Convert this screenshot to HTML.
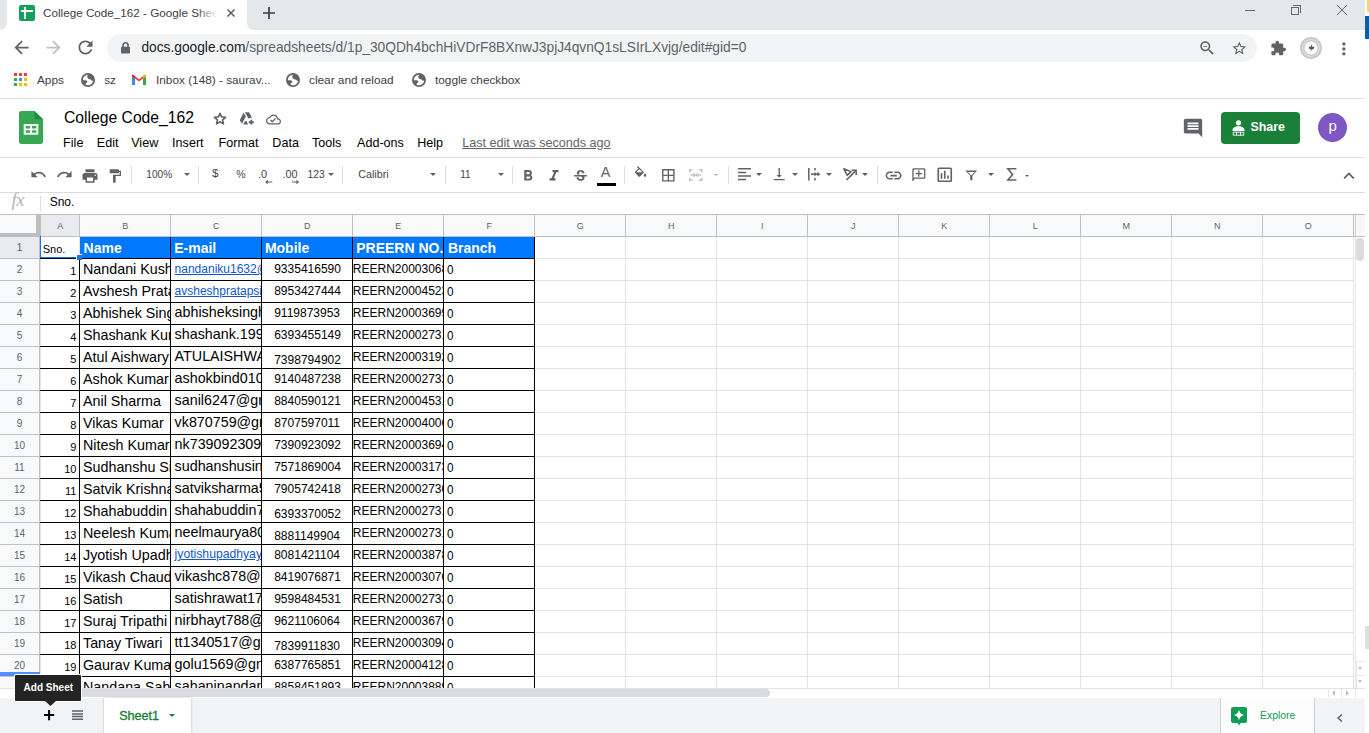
<!DOCTYPE html><html><head><meta charset="utf-8"><style>
*{box-sizing:border-box;margin:0;padding:0}
html,body{width:1369px;height:733px;overflow:hidden;background:#fff;font-family:"Liberation Sans",sans-serif;position:relative}
.abs{position:absolute}
.ic{position:absolute;display:block;overflow:visible}
.t{position:absolute;white-space:nowrap;line-height:1}
.caret{position:absolute;width:0;height:0;border-style:solid;border-color:transparent;border-bottom-width:0}
.clip{position:absolute;overflow:hidden}
</style></head><body>

<div class="abs" style="left:0px;top:0px;width:1365px;height:30px;background:#e5e8eb;"></div>
<div class="abs" style="left:0px;top:0px;width:7px;height:30px;background:#fff;"></div>
<div class="abs" style="left:0px;top:0px;width:7px;height:30px;background:#e5e8eb;border-bottom-right-radius:7px"></div>
<div class="abs" style="left:7px;top:0px;width:240px;height:31px;background:#fff;"></div>
<div class="abs" style="left:247px;top:0px;width:10px;height:30px;background:#fff;"></div>
<div class="abs" style="left:247px;top:0px;width:1118px;height:30px;background:#e5e8eb;border-bottom-left-radius:7px"></div>
<div class="abs" style="left:19px;top:5px;width:16px;height:16px;background:#15a05a;border-radius:2px"></div>
<div class="abs" style="left:24px;top:7px;width:2px;height:12px;background:#fff;"></div>
<div class="abs" style="left:21px;top:10px;width:12px;height:2px;background:#fff;"></div>
<div class="clip" style="left:43px;top:0;width:176px;height:28px"><div class="t" style="left:0px;top:7.30px;font-size:11.7px;color:#3c4043;font-weight:normal;">College Code_162 - Google Sheets</div></div>
<div class="abs" style="left:197px;top:3px;width:23px;height:22px;background:linear-gradient(90deg,rgba(255,255,255,0),#fff 90%);"></div>
<svg class="ic" style="left:227px;top:9px;width:8px;height:8px" viewBox="0 0 8 8"><path d="M0.5 0.5L7.5 7.5M7.5 0.5L0.5 7.5" stroke="#5f6368" stroke-width="1.6"/></svg>
<svg class="ic" style="left:263px;top:7px;width:12px;height:12px" viewBox="0 0 12 12"><path d="M6 0v12M0 6h12" stroke="#3c4043" stroke-width="1.7"/></svg>
<div class="abs" style="left:1245px;top:10px;width:10px;height:1px;background:#6a6a6a;"></div>
<div class="abs" style="left:1291px;top:7px;width:8px;height:8px;background:transparent;border:1px solid #6a6a6a"></div>
<div class="abs" style="left:1293px;top:5px;width:8px;height:8px;background:transparent;border-top:1px solid #6a6a6a;border-right:1px solid #6a6a6a"></div>
<svg class="ic" style="left:1337px;top:5px;width:10px;height:10px" viewBox="0 0 10 10"><path d="M0 0L10 10M10 0L0 10" stroke="#6a6a6a" stroke-width="1"/></svg>
<div class="abs" style="left:1365px;top:0px;width:4px;height:733px;background:#fff;"></div>
<div class="abs" style="left:1367px;top:0px;width:2px;height:12px;background:#f2d675;"></div>
<div class="abs" style="left:1365px;top:16px;width:4px;height:23px;background:#0b5cad;"></div>
<div class="abs" style="left:1365px;top:626px;width:4px;height:23px;background:#e0e0e0;"></div>
<svg class="ic" style="left:10.50px;top:37.00px;width:21.00px;height:21.00px" viewBox="0 0 24 24"><path fill="#5f6368" d="M20 11H7.83l5.59-5.59L12 4l-8 8 8 8 1.41-1.41L7.83 13H20v-2z"/></svg>
<svg class="ic" style="left:42.50px;top:37.00px;width:21.00px;height:21.00px" viewBox="0 0 24 24"><path fill="#bdc1c6" d="M12 4l-1.41 1.41L16.17 11H4v2h12.17l-5.58 5.59L12 20l8-8z"/></svg>
<svg class="ic" style="left:74.50px;top:37.40px;width:21.00px;height:21.00px" viewBox="0 0 24 24"><path fill="#5f6368" d="M17.65 6.35C16.2 4.9 14.21 4 12 4c-4.42 0-7.99 3.58-7.99 8s3.57 8 7.99 8c3.73 0 6.84-2.55 7.73-6h-2.08c-.82 2.33-3.04 4-5.65 4-3.31 0-6-2.690-6-6s2.69-6 6-6c1.66 0 3.14.69 4.22 1.78L13 11h7V4l-2.35 2.35z"/></svg>
<div class="abs" style="left:107px;top:34px;width:1150px;height:28px;background:#f1f3f4;border-radius:14px"></div>
<svg class="ic" style="left:120.5px;top:41.5px;width:9px;height:11.5px" viewBox="0 0 9 11.5"><path d="M2 5V3.3a2.5 2.5 0 0 1 5 0V5" stroke="#5f6368" stroke-width="1.6" fill="none"/><rect x="0" y="4.8" width="9" height="6.7" rx="1" fill="#5f6368"/></svg>
<div class="t" style="left:141.4px;top:40.76px;font-size:13.75px;color:#202124;font-weight:normal;">docs.google.com<span style="color:#5f6368">/spreadsheets/d/1p_30QDh4bchHiVDrF8BXnwJ3pjJ4qvnQ1sLSIrLXvjg/edit#gid=0</span></div>
<svg class="ic" style="left:1197.70px;top:38.70px;width:18.40px;height:18.40px" viewBox="0 0 24 24"><path fill="#5f6368" d="M15.5 14h-.79l-.28-.27C15.41 12.59 16 11.11 16 9.5 16 5.910 13.09 3 9.5 3S3 5.91 3 9.5 5.91 16 9.5 16c1.61 0 3.09-.59 4.23-1.57l.27.28v.79l5 4.99L20.49 19l-4.99-5zm-6 0C7.01 14 5 11.99 5 9.5S7.01 5 9.5 5 14 7.01 14 9.5 11.99 14 9.5 14zM7 9h5v1H7z"/></svg>
<svg class="ic" style="left:1230.80px;top:40.00px;width:16.60px;height:16.60px" viewBox="0 0 24 24"><path fill="#5f6368" d="M22 9.24l-7.19-.62L12 2 9.19 8.63 2 9.24l5.46 4.73L5.82 21 12 17.27 18.18 21l-1.63-7.03L22 9.24zM12 15.4l-3.76 2.27 1-4.28-3.32-2.88 4.38-.38L12 6.1l1.710 4.04 4.38.38-3.32 2.88 1 4.28L12 15.4z"/></svg>
<svg class="ic" style="left:1270.40px;top:40.00px;width:16.70px;height:16.70px" viewBox="0 0 24 24"><path fill="#5f6368" d="M20.5 11H19V7c0-1.1-.9-2-2-2h-4V3.5C13 2.12 11.88 1 10.5 1S8 2.12 8 3.5V5H4c-1.1 0-1.99.9-1.99 2v3.8H3.5c1.49 0 2.7 1.21 2.7 2.7s-1.21 2.7-2.7 2.7H2V20c0 1.1.9 2 2 2h3.8v-1.5c0-1.49 1.21-2.7 2.7-2.7 1.49 0 2.7 1.21 2.7 2.7V22H17c1.1 0 2-.9 2-2v-4h1.5c1.38 0 2.5-1.12 2.5-2.5S21.88 11 20.5 11z"/></svg>
<div class="abs" style="left:1300px;top:37px;width:21.5px;height:21.5px;background:radial-gradient(circle,#fdfdfd 0,#fdfdfd 40%,#c6c6c6 44%,#dedede 55%,#c2c2c2 65%,#e0e0e0 78%,#c8c8c8 92%,#d8d8d8 100%);border-radius:50%"></div>
<svg class="ic" style="left:1307.5px;top:43.5px;width:7px;height:7px" viewBox="0 0 7 7"><path d="M3.5 0.3L4.3 3 6.5 2.4 5.4 5.3H1.6L0.5 2.4 2.7 3z" fill="#555"/><circle cx="3.5" cy="6" r="0.8" fill="#777"/></svg>
<svg class="ic" style="left:1333.80px;top:38.50px;width:19.80px;height:19.80px" viewBox="0 0 24 24"><path fill="#5f6368" d="M12 8c1.1 0 2-.9 2-2s-.9-2-2-2-2 .9-2 2 .9 2 2 2zm0 2c-1.1 0-2 .9-2 2s.9 2 2 2 2-.9 2-2-.9-2-2-2zm0 6c-1.1 0-2 .9-2 2s.9 2 2 2 2-.9 2-2-.9-2-2-2z"/></svg>
<div class="abs" style="left:14px;top:73px;width:3px;height:3px;background:#ea4335;"></div>
<div class="abs" style="left:19px;top:73px;width:3px;height:3px;background:#ea4335;"></div>
<div class="abs" style="left:24px;top:73px;width:3px;height:3px;background:#ea4335;"></div>
<div class="abs" style="left:14px;top:78px;width:3px;height:3px;background:#34a853;"></div>
<div class="abs" style="left:19px;top:78px;width:3px;height:3px;background:#4285f4;"></div>
<div class="abs" style="left:24px;top:78px;width:3px;height:3px;background:#fbbc04;"></div>
<div class="abs" style="left:14px;top:83px;width:3px;height:3px;background:#34a853;"></div>
<div class="abs" style="left:19px;top:83px;width:3px;height:3px;background:#fbbc04;"></div>
<div class="abs" style="left:24px;top:83px;width:3px;height:3px;background:#fbbc04;"></div>
<div class="t" style="left:37px;top:75.01px;font-size:11.8px;color:#3c4043;font-weight:normal;">Apps</div>
<svg class="ic" style="left:81px;top:72.9px;width:14px;height:14px" viewBox="0 0 14 14"><circle cx="7" cy="7" r="6.1" stroke="#5f6368" stroke-width="1.8" fill="none"/><path d="M6.2 3.2C6.6 2.1 7.6 1.4 9 1.4 11.2 2 13 4.2 13.2 7 12.2 7.8 11.4 8.1 10.6 7.6 10.1 6.6 9.1 6.1 7.8 5.9 6.8 5.5 6 4.3 6.2 3.2z" fill="#5f6368"/><path d="M0.9 7.3C2.4 7.3 4.4 7.2 5.5 7.6 6.7 8.2 6.6 9.6 5.5 10 4.7 10.3 4.4 11 4.6 12.8 2.6 12 1.1 10 0.9 7.3z" fill="#5f6368"/></svg>
<svg class="ic" style="left:285.5px;top:72.9px;width:14px;height:14px" viewBox="0 0 14 14"><circle cx="7" cy="7" r="6.1" stroke="#5f6368" stroke-width="1.8" fill="none"/><path d="M6.2 3.2C6.6 2.1 7.6 1.4 9 1.4 11.2 2 13 4.2 13.2 7 12.2 7.8 11.4 8.1 10.6 7.6 10.1 6.6 9.1 6.1 7.8 5.9 6.8 5.5 6 4.3 6.2 3.2z" fill="#5f6368"/><path d="M0.9 7.3C2.4 7.3 4.4 7.2 5.5 7.6 6.7 8.2 6.6 9.6 5.5 10 4.7 10.3 4.4 11 4.6 12.8 2.6 12 1.1 10 0.9 7.3z" fill="#5f6368"/></svg>
<svg class="ic" style="left:411.7px;top:72.9px;width:14px;height:14px" viewBox="0 0 14 14"><circle cx="7" cy="7" r="6.1" stroke="#5f6368" stroke-width="1.8" fill="none"/><path d="M6.2 3.2C6.6 2.1 7.6 1.4 9 1.4 11.2 2 13 4.2 13.2 7 12.2 7.8 11.4 8.1 10.6 7.6 10.1 6.6 9.1 6.1 7.8 5.9 6.8 5.5 6 4.3 6.2 3.2z" fill="#5f6368"/><path d="M0.9 7.3C2.4 7.3 4.4 7.2 5.5 7.6 6.7 8.2 6.6 9.6 5.5 10 4.7 10.3 4.4 11 4.6 12.8 2.6 12 1.1 10 0.9 7.3z" fill="#5f6368"/></svg>
<div class="t" style="left:104.2px;top:75.01px;font-size:11.8px;color:#3c4043;font-weight:normal;">sz</div>
<svg class="ic" style="left:132px;top:75px;width:14px;height:10px" viewBox="0 0 14 10"><path d="M0 1.2V10h3V3.6z" fill="#4285f4"/><path d="M11 3.6V10h3V1.2z" fill="#34a853"/><path d="M0 1.2L7 6.4 14 1.2V0.6A1 1 0 0 0 12.6 0L7 4.2 1.4 0A1 1 0 0 0 0 .6z" fill="#ea4335"/><path d="M11 1.5v2.1l3-2.4V.6A1 1 0 0 0 12.6 0z" fill="#fbbc04"/><path d="M0 .6v.6l3 2.4V1.5L1.4 0A1 1 0 0 0 0 .6z" fill="#c5221f"/></svg>
<div class="t" style="left:156px;top:75.01px;font-size:11.8px;color:#3c4043;font-weight:normal;">Inbox (148) - saurav...</div>
<div class="t" style="left:309px;top:75.01px;font-size:11.8px;color:#3c4043;font-weight:normal;">clear and reload</div>
<div class="t" style="left:435px;top:75.01px;font-size:11.8px;color:#3c4043;font-weight:normal;">toggle checkbox</div>
<div class="abs" style="left:0px;top:98px;width:1365px;height:1px;background:#dadce0;"></div>
<svg class="ic" style="left:19px;top:111px;width:24px;height:33px" viewBox="0 0 24 33"><path d="M2.5 0h13l8.5 8.3v22.2a2.5 2.5 0 0 1-2.5 2.5h-19A2.5 2.5 0 0 1 0 30.5v-28A2.5 2.5 0 0 1 2.5 0z" fill="#34a853"/><path d="M15.5 0L24 8.3h-8.5z" fill="#1e8e3e"/><path d="M4.7 13h14.6v10.7H4.7z" fill="#fff"/><path d="M6.7 15h4.4v2.4H6.7zM12.9 15h4.4v2.4h-4.4zM6.7 19.3h4.4v2.4H6.7zM12.9 19.3h4.4v2.4h-4.4z" fill="#34a853"/></svg>
<div class="t" style="left:64px;top:110.21px;font-size:15.7px;color:#000;font-weight:normal;">College Code_162</div>
<svg class="ic" style="left:213px;top:112.4px;width:14px;height:13.5px" viewBox="0 0 14 13.5"><path d="M7 1.3L8.6 4.9 12.6 5.3 9.6 7.9 10.5 11.9 7 9.8 3.5 11.9 4.4 7.9 1.4 5.3 5.4 4.9z" stroke="#5f6368" stroke-width="1.6" fill="none" stroke-linejoin="round"/></svg>
<svg class="ic" style="left:237px;top:110px;width:20px;height:17px" viewBox="0 0 20 17"><path d="M6.6 2.6L8.9 6.6 4.9 13.8 2.8 10.2z" fill="#5f6368"/><path d="M7.9 2.3H12.1L14.9 7.4 11.4 8.6z" fill="#5f6368"/><path d="M6.3 14.4H10.9L9.9 11.3H7.8z" fill="#5f6368"/><path d="M14.3 9.8v4.8M11.7 12.3h5.1" stroke="#5f6368" stroke-width="1.9"/></svg>
<svg class="ic" style="left:265.80px;top:111.80px;width:15.00px;height:15.00px" viewBox="0 0 24 24"><path fill="#5f6368" d="M19.35 10.04C18.67 6.59 15.64 4 12 4 9.11 4 6.6 5.64 5.35 8.04 2.34 8.36 0 10.91 0 14c0 3.31 2.69 6 6 6h13c2.76 0 5-2.24 5-5 0-2.64-2.05-4.78-4.65-4.96zM19 18H6c-2.21 0-4-1.79-4-4 0-2.05 1.53-3.76 3.56-3.97l1.07-.11.5-.95C8.08 7.14 9.94 6 12 6c2.62 0 4.88 1.86 5.39 4.43l.3 1.5 1.53.11c1.56.1 2.78 1.41 2.78 2.96 0 1.650-1.35 3-3 3zm-9-3.82l-2.09-2.09L6.5 13.5 10 17l6.01-6.01-1.41-1.41z"/></svg>
<div class="t" style="left:63.1px;top:136.73px;font-size:12.6px;color:#000;font-weight:normal;">File</div>
<div class="t" style="left:96.8px;top:136.73px;font-size:12.6px;color:#000;font-weight:normal;">Edit</div>
<div class="t" style="left:131.2px;top:136.73px;font-size:12.6px;color:#000;font-weight:normal;">View</div>
<div class="t" style="left:172.1px;top:136.73px;font-size:12.6px;color:#000;font-weight:normal;">Insert</div>
<div class="t" style="left:218.5px;top:136.73px;font-size:12.6px;color:#000;font-weight:normal;">Format</div>
<div class="t" style="left:272.3px;top:136.73px;font-size:12.6px;color:#000;font-weight:normal;">Data</div>
<div class="t" style="left:312px;top:136.73px;font-size:12.6px;color:#000;font-weight:normal;">Tools</div>
<div class="t" style="left:357px;top:136.73px;font-size:12.6px;color:#000;font-weight:normal;">Add-ons</div>
<div class="t" style="left:417.2px;top:136.73px;font-size:12.6px;color:#000;font-weight:normal;">Help</div>
<div class="t" style="left:462.2px;top:136.73px;font-size:12.6px;color:#5f6368;font-weight:normal;text-decoration:underline">Last edit was seconds ago</div>
<svg class="ic" style="left:1182.00px;top:117.00px;width:22.00px;height:22.00px" viewBox="0 0 24 24"><path fill="#5f6368" d="M21.99 4c0-1.1-.89-2-1.99-2H4c-1.1 0-2 .9-2 2v12c0 1.1.9 2 2 2h14l4 4-.01-18zM18 14H6v-2h12v2zm0-3H6V9h12v2zm0-3H6V6h12v2z"/></svg>
<div class="abs" style="left:1221px;top:112px;width:79px;height:32px;background:#188038;border-radius:4px"></div>
<svg class="ic" style="left:1232px;top:119.5px;width:13px;height:16px" viewBox="0 0 13 16"><circle cx="6.5" cy="2.8" r="2.6" fill="#fff"/><path d="M0.5 10.2c0-2.6 3-3.9 6-3.9s6 1.3 6 3.9v.8h-12z" fill="#fff"/><path d="M1.2 12.2h10.6v3H1.2zM4.5 12.2v3M8.5 12.2v3" stroke="#fff" stroke-width="0.9" fill="none"/></svg>
<div class="t" style="left:1250.5px;top:120.80px;font-size:12.4px;color:#fff;font-weight:bold;">Share</div>
<div class="abs" style="left:1318px;top:113px;width:29px;height:29px;background:#7e57c2;border-radius:50%"></div>
<div class="t" style="left:1328.5px;top:117.80px;font-size:15px;color:#fff;font-weight:normal;">p</div>
<div class="abs" style="left:0px;top:157px;width:1365px;height:1px;background:#dadce0;"></div>
<svg class="ic" style="left:29.80px;top:166.20px;width:17.00px;height:17.00px" viewBox="0 0 24 24"><path fill="#5f6368" d="M12.5 8c-2.65 0-5.05.99-6.9 2.6L2 7v9h9l-3.62-3.62c1.39-1.16 3.16-1.88 5.12-1.88 3.54 0 6.55 2.31 7.6 5.5l2.37-.78C21.08 11.03 17.15 8 12.5 8z"/></svg>
<svg class="ic" style="left:56.10px;top:166.20px;width:17.00px;height:17.00px" viewBox="0 0 24 24"><path fill="#5f6368" d="M18.4 10.6C16.55 8.99 14.15 8 11.5 8c-4.65 0-8.58 3.03-9.960 7.22L3.9 16c1.05-3.19 4.05-5.5 7.6-5.5 1.95 0 3.73.72 5.12 1.88L13 16h9V7l-3.6 3.6z"/></svg>
<svg class="ic" style="left:80.60px;top:166.75px;width:18.00px;height:18.00px" viewBox="0 0 24 24"><path fill="#5f6368" d="M19 8H5c-1.66 0-3 1.34-3 3v6h4v4h12v-4h4v-6c0-1.66-1.34-3-3-3zm-3 11H8v-5h8v5zm3-7c-.55 0-1-.45-1-1s.45-1 1-1 1 .45 1 1-.45 1-1 1zm-1-9H6v4h12V3z"/></svg>
<svg class="ic" style="left:107.20px;top:167.70px;width:16.00px;height:16.00px" viewBox="0 0 24 24"><path fill="#5f6368" d="M18 4V3c0-.55-.45-1-1-1H5c-.55 0-1 .45-1 1v4c0 .55.45 1 1 1h12c.55 0 1-.45 1-1V6h1v4H9v11c0 .55.45 1 1 1h2c.55 0 1-.45 1-1v-9h8V4h-3z"/></svg>
<div class="abs" style="left:131px;top:166px;width:1px;height:18px;background:#dadce0;"></div>
<div class="abs" style="left:198px;top:166px;width:1px;height:18px;background:#dadce0;"></div>
<div class="abs" style="left:342px;top:166px;width:1px;height:18px;background:#dadce0;"></div>
<div class="abs" style="left:445px;top:166px;width:1px;height:18px;background:#dadce0;"></div>
<div class="abs" style="left:512px;top:166px;width:1px;height:18px;background:#dadce0;"></div>
<div class="abs" style="left:624px;top:166px;width:1px;height:18px;background:#dadce0;"></div>
<div class="abs" style="left:728px;top:166px;width:1px;height:18px;background:#dadce0;"></div>
<div class="abs" style="left:877px;top:166px;width:1px;height:18px;background:#dadce0;"></div>
<div class="t" style="left:146.3px;top:169.85px;font-size:10.1px;color:#444;font-weight:normal;">100%</div>
<div class="caret" style="left:183.8px;top:173.2px;border-left-width:3.5px;border-right-width:3.5px;border-top-width:3.5px;border-top-color:#5f6368"></div>
<div class="t" style="left:212px;top:168.01px;font-size:11.8px;color:#444;font-weight:normal;">$</div>
<div class="t" style="left:236.3px;top:169.41px;font-size:10.5px;color:#444;font-weight:normal;">%</div>
<div class="t" style="left:257.9px;top:168.99px;font-size:11px;color:#444;font-weight:normal;">.0</div>
<svg class="ic" style="left:264.7px;top:180px;width:7.3px;height:4px" viewBox="0 0 7.3 4"><path d="M7.3 2H1.3M2.8 0.4L1 2l1.8 1.6" stroke="#5f6368" stroke-width="1.2" fill="none"/></svg>
<div class="t" style="left:282.5px;top:169.07px;font-size:10.9px;color:#444;font-weight:normal;">.00</div>
<svg class="ic" style="left:292px;top:180px;width:7.3px;height:4px" viewBox="0 0 7.3 4"><path d="M0 2h6M4.5 0.4L6.3 2 4.5 3.6" stroke="#5f6368" stroke-width="1.2" fill="none"/></svg>
<div class="t" style="left:307.5px;top:169.58px;font-size:10.3px;color:#444;font-weight:normal;">123</div>
<div class="caret" style="left:328.2px;top:173.2px;border-left-width:3.0px;border-right-width:3.0px;border-top-width:3.5px;border-top-color:#5f6368"></div>
<div class="t" style="left:358.2px;top:168.90px;font-size:10.75px;color:#444;font-weight:normal;">Calibri</div>
<div class="caret" style="left:430px;top:173.2px;border-left-width:3.5px;border-right-width:3.5px;border-top-width:3.5px;border-top-color:#5f6368"></div>
<div class="t" style="left:460.3px;top:169.53px;font-size:10px;color:#444;font-weight:normal;">11</div>
<div class="caret" style="left:497.8px;top:173.2px;border-left-width:3.5px;border-right-width:3.5px;border-top-width:3.5px;border-top-color:#5f6368"></div>
<svg class="ic" style="left:518.50px;top:166.60px;width:18.00px;height:18.00px" viewBox="0 0 24 24"><path fill="#5f6368" d="M15.6 10.79c.97-.67 1.65-1.77 1.65-2.79 0-2.26-1.75-4-4-4H7v14h7.04c2.09 0 3.71-1.7 3.71-3.79 0-1.52-.86-2.82-2.1-3.42zM10 6.5h3c.83 0 1.5.67 1.5 1.5s-.67 1.5-1.5 1.5h-3v-3zm3.5 9H10v-3h3.5c.83 0 1.5.67 1.5 1.5s-.67 1.5-1.5 1.5z"/></svg>
<svg class="ic" style="left:545.00px;top:166.60px;width:18.00px;height:18.00px" viewBox="0 0 24 24"><path fill="#5f6368" d="M10 4v3h2.21l-3.42 8H6v3h8v-3h-2.21l3.42-8H18V4z"/></svg>
<svg class="ic" style="left:571.60px;top:167.85px;width:17.00px;height:17.00px" viewBox="0 0 24 24"><path fill="#5f6368" d="M7.24 8.75c-.26-.48-.39-1.03-.39-1.67 0-.61.13-1.16.4-1.67.26-.5.63-.93 1.11-1.29.48-.35 1.05-.63 1.7-.83.66-.19 1.39-.29 2.18-.29.81 0 1.54.11 2.21.34.66.22 1.23.54 1.69.94.47.4.83.88 1.08 1.43.25.55.38 1.15.38 1.81h-3.01c0-.31-.05-.59-.15-.85-.09-.27-.24-.49-.44-.68-.2-.19-.45-.33-.75-.44-.3-.1-.66-.16-1.06-.16-.39 0-.74.04-1.03.13-.29.09-.53.21-.72.36-.19.16-.34.34-.44.55-.1.21-.15.43-.15.66 0 .48.25.88.74 1.21.38.25.77.48 1.41.7H7.39c-.05-.08-.11-.17-.15-.25zM21 12v-2H3v2h9.62c.18.07.4.14.55.2.37.17.66.34.87.51.21.17.35.36.43.57.07.2.11.43.11.69 0 .23-.05.45-.14.66-.09.2-.23.38-.42.53-.19.15-.42.26-.71.35-.29.08-.63.13-1.01.13-.43 0-.83-.04-1.18-.13s-.66-.23-.91-.42c-.25-.19-.45-.44-.59-.75-.14-.31-.25-.76-.25-1.21H6.4c0 .55.08 1.13.24 1.58.16.45.37.85.65 1.21.28.35.6.66.98.92.37.26.78.48 1.22.65.44.17.9.3 1.38.39.48.08.96.13 1.44.13.8 0 1.53-.09 2.18-.28s1.21-.45 1.67-.79c.46-.34.82-.77 1.07-1.27s.38-1.07.38-1.71c0-.6-.1-1.14-.31-1.61-.05-.11-.11-.23-.17-.33H21z"/></svg>
<div class="t" style="left:600.8px;top:165.43px;font-size:14.5px;color:#5f6368;font-weight:normal;">A</div>
<div class="abs" style="left:597px;top:183px;width:19px;height:2.7px;background:#000;"></div>
<svg class="ic" style="left:632.60px;top:166.40px;width:15.20px;height:15.20px" viewBox="0 0 24 24"><path fill="#5f6368" d="M16.56 8.94L7.62 0 6.21 1.41l2.38 2.38-5.15 5.15c-.59.59-.59 1.54 0 2.12l5.5 5.5c.29.29.68.44 1.06.44s.77-.15 1.06-.44l5.5-5.5c.59-.58.59-1.53 0-2.12zM5.21 10L10 5.21 14.79 10H5.21zM19 11.5s-2 2.17-2 3.5c0 1.1.9 2 2 2s2-.9 2-2c0-1.33-2-3.5-2-3.5z"/></svg>
<svg class="ic" style="left:659.90px;top:166.70px;width:16.70px;height:16.70px" viewBox="0 0 24 24"><path fill="#5f6368" d="M3 3v18h18V3H3zm8 16H5v-6h6v6zm0-8H5V5h6v6zm8 8h-6v-6h6v6zm0-8h-6V5h6v6z"/></svg>
<svg class="ic" style="left:689.4px;top:169px;width:13.6px;height:12px" viewBox="0 0 13.6 12"><path d="M0.8 0v3.2M12.8 0v3.2M0.8 8.8V12M12.8 8.8V12M0 0.8h3.5M10.1 0.8h3.5M0 11.2h3.5M10.1 11.2h3.5M1.5 6h3.8M8.3 6h3.8" stroke="#bdc1c6" stroke-width="1.5" fill="none"/><path d="M4.5 4.3L6.3 6 4.5 7.7M9.1 4.3L7.3 6 9.1 7.7" stroke="#bdc1c6" stroke-width="1.2" fill="none"/></svg>
<div class="caret" style="left:712.7px;top:173.7px;border-left-width:3.15px;border-right-width:3.15px;border-top-width:2.6px;border-top-color:#bdc1c6"></div>
<svg class="ic" style="left:737.9px;top:168.2px;width:13px;height:12.4px" viewBox="0 0 13 12.4"><path d="M0 0.8h13M0 4.4h8.2M0 8h13M0 11.6h8.2" stroke="#5f6368" stroke-width="1.5"/></svg>
<div class="caret" style="left:755.9px;top:173px;border-left-width:3.5px;border-right-width:3.5px;border-top-width:3.5px;border-top-color:#5f6368"></div>
<svg class="ic" style="left:771.10px;top:166.00px;width:16.40px;height:16.40px" viewBox="0 0 24 24"><path fill="#5f6368" d="M16 13h-3V3h-2v10H8l4 4 4-4zM4 19v2h16v-2H4z"/></svg>
<div class="caret" style="left:791.7px;top:173px;border-left-width:3.5px;border-right-width:3.5px;border-top-width:3.5px;border-top-color:#5f6368"></div>
<svg class="ic" style="left:808px;top:168px;width:12.5px;height:12.4px" viewBox="0 0 12.5 12.4"><path d="M0.8 0v12.4M7 0v2.6M7 4.6v3.2M7 9.8v2.6" stroke="#5f6368" stroke-width="1.5"/><path d="M3 6.2h8" stroke="#5f6368" stroke-width="1.5"/><path d="M9.3 3.8l3 2.4-3 2.4z" fill="#5f6368"/></svg>
<div class="caret" style="left:826.4px;top:173px;border-left-width:3.5px;border-right-width:3.5px;border-top-width:3.5px;border-top-color:#5f6368"></div>
<svg class="ic" style="left:843.3px;top:167.6px;width:14px;height:12.3px" viewBox="0 0 14 12.3"><path d="M0.8 0.8L8 3.6 4.2 7.4z" stroke="#5f6368" stroke-width="1.5" fill="none" stroke-linejoin="round"/><path d="M3.5 12L12.6 2.9" stroke="#5f6368" stroke-width="1.6"/><path d="M8.6 2.3h4.6v4.6" stroke="#5f6368" stroke-width="1.5" fill="none"/></svg>
<div class="caret" style="left:861.8px;top:173px;border-left-width:3.5px;border-right-width:3.5px;border-top-width:3.5px;border-top-color:#5f6368"></div>
<svg class="ic" style="left:884.40px;top:165.80px;width:19.20px;height:19.20px" viewBox="0 0 24 24"><path fill="#5f6368" d="M3.9 12c0-1.71 1.39-3.1 3.1-3.1h4V7H7c-2.76 0-5 2.24-5 5s2.24 5 5 5h4v-1.9H7c-1.71 0-3.1-1.39-3.1-3.1zM8 13h8v-2H8v2zm9-6h-4v1.9h4c1.71 0 3.1 1.39 3.1 3.1s-1.39 3.1-3.1 3.1h-4V17h4c2.76 0 5-2.24 5-5s-2.24-5-5-5z"/></svg>
<svg class="ic" style="transform:scaleX(-1);left:911.40px;top:167.10px;width:15.70px;height:15.70px" viewBox="0 0 24 24"><path fill="#5f6368" d="M22 4c0-1.1-.9-2-2-2H4c-1.1 0-1.99.9-1.99 2L2 16c0 1.1.9 2 2 2h14l4 4V4zm-2 13.17L18.83 16H4V4h16v13.17zM13 5h-2v4H7v2h4v4h2v-4h4V9h-4z"/></svg>
<svg class="ic" style="left:934.80px;top:165.20px;width:19.50px;height:19.50px" viewBox="0 0 24 24"><path fill="#5f6368" d="M9 17H7v-7h2v7zm4 0h-2V7h2v10zm4 0h-2v-4h2v4zm2 2H5V5h14v14zm0-16H5c-1.1 0-2 .9-2 2v14c0 1.1.9 2 2 2h14c1.1 0 2-.9 2-2V5c0-1.1-.9-2-2-2z"/></svg>
<svg class="ic" style="left:964.7px;top:169.6px;width:12.5px;height:10.3px" viewBox="0 0 12.5 10.3"><path d="M0.3 0.6h11.9L7.4 5.8v4.5H5.2V5.8z" fill="#5f6368"/><path d="M2.8 1.9h6.9L6.3 5.4z" fill="#fff"/></svg>
<div class="caret" style="left:987.7px;top:173px;border-left-width:3.5px;border-right-width:3.5px;border-top-width:3.5px;border-top-color:#5f6368"></div>
<svg class="ic" style="left:1006.8px;top:168.2px;width:9.4px;height:12.8px" viewBox="0 0 9.4 12.8"><path d="M9.4 0.8H0.9L5.6 6.4 0.9 12H9.4" stroke="#5f6368" stroke-width="1.6" fill="none"/></svg>
<div class="caret" style="left:1024.9px;top:174.6px;border-left-width:2.2px;border-right-width:2.2px;border-top-width:2.7px;border-top-color:#5f6368"></div>
<svg class="ic" style="left:1337.70px;top:164.70px;width:21.80px;height:21.80px" viewBox="0 0 24 24"><path fill="#5f6368" d="M12 8l-6 6 1.41 1.41L12 10.830l4.59 4.58L18 14z"/></svg>
<div class="abs" style="left:0px;top:192px;width:1365px;height:1px;background:#dadce0;"></div>
<div class="t" style="left:11.5px;top:190.84px;font-size:18.5px;color:#b4b4b4;font-weight:normal;font-family:'Liberation Serif',serif;font-style:italic;letter-spacing:-0.3px">fx</div>
<div class="abs" style="left:40px;top:196px;width:1px;height:15px;background:#dadce0;"></div>
<div class="t" style="left:49.7px;top:195.84px;font-size:12px;color:#000;font-weight:normal;">Sno.</div>
<div class="abs" style="left:0px;top:214px;width:1365px;height:1px;background:#c0c0c0;"></div>
<div class="abs" style="left:0px;top:215px;width:1353px;height:21px;background:#f8f9fa;"></div>
<div class="abs" style="left:40px;top:215px;width:39px;height:21px;background:#e8eaed;"></div>
<div class="abs" style="left:1353px;top:215px;width:12px;height:21px;background:#f8f8f8;"></div>
<div class="abs" style="left:0px;top:237px;width:39px;height:451px;background:#f8f9fa;"></div>
<div class="abs" style="left:0px;top:237px;width:39px;height:21px;background:#e8eaed;"></div>
<div class="abs" style="left:40px;top:215px;width:1px;height:21px;background:#c0c0c0;"></div>
<div class="abs" style="left:40px;top:237px;width:1px;height:451px;background:#e2e3e3;"></div>
<div class="abs" style="left:79px;top:215px;width:1px;height:21px;background:#c0c0c0;"></div>
<div class="abs" style="left:79px;top:237px;width:1px;height:451px;background:#e2e3e3;"></div>
<div class="abs" style="left:170px;top:215px;width:1px;height:21px;background:#c0c0c0;"></div>
<div class="abs" style="left:170px;top:237px;width:1px;height:451px;background:#e2e3e3;"></div>
<div class="abs" style="left:261px;top:215px;width:1px;height:21px;background:#c0c0c0;"></div>
<div class="abs" style="left:261px;top:237px;width:1px;height:451px;background:#e2e3e3;"></div>
<div class="abs" style="left:352px;top:215px;width:1px;height:21px;background:#c0c0c0;"></div>
<div class="abs" style="left:352px;top:237px;width:1px;height:451px;background:#e2e3e3;"></div>
<div class="abs" style="left:443px;top:215px;width:1px;height:21px;background:#c0c0c0;"></div>
<div class="abs" style="left:443px;top:237px;width:1px;height:451px;background:#e2e3e3;"></div>
<div class="abs" style="left:534px;top:215px;width:1px;height:21px;background:#c0c0c0;"></div>
<div class="abs" style="left:534px;top:237px;width:1px;height:451px;background:#e2e3e3;"></div>
<div class="abs" style="left:625px;top:215px;width:1px;height:21px;background:#c0c0c0;"></div>
<div class="abs" style="left:625px;top:237px;width:1px;height:451px;background:#e2e3e3;"></div>
<div class="abs" style="left:716px;top:215px;width:1px;height:21px;background:#c0c0c0;"></div>
<div class="abs" style="left:716px;top:237px;width:1px;height:451px;background:#e2e3e3;"></div>
<div class="abs" style="left:807px;top:215px;width:1px;height:21px;background:#c0c0c0;"></div>
<div class="abs" style="left:807px;top:237px;width:1px;height:451px;background:#e2e3e3;"></div>
<div class="abs" style="left:898px;top:215px;width:1px;height:21px;background:#c0c0c0;"></div>
<div class="abs" style="left:898px;top:237px;width:1px;height:451px;background:#e2e3e3;"></div>
<div class="abs" style="left:989px;top:215px;width:1px;height:21px;background:#c0c0c0;"></div>
<div class="abs" style="left:989px;top:237px;width:1px;height:451px;background:#e2e3e3;"></div>
<div class="abs" style="left:1080px;top:215px;width:1px;height:21px;background:#c0c0c0;"></div>
<div class="abs" style="left:1080px;top:237px;width:1px;height:451px;background:#e2e3e3;"></div>
<div class="abs" style="left:1171px;top:215px;width:1px;height:21px;background:#c0c0c0;"></div>
<div class="abs" style="left:1171px;top:237px;width:1px;height:451px;background:#e2e3e3;"></div>
<div class="abs" style="left:1262px;top:215px;width:1px;height:21px;background:#c0c0c0;"></div>
<div class="abs" style="left:1262px;top:237px;width:1px;height:451px;background:#e2e3e3;"></div>
<div class="abs" style="left:1353px;top:215px;width:1px;height:21px;background:#c0c0c0;"></div>
<div class="abs" style="left:1353px;top:237px;width:1px;height:451px;background:#e2e3e3;"></div>
<div class="abs" style="left:1355px;top:237px;width:1px;height:451px;background:#e6e6e6;"></div>
<div class="abs" style="left:1355px;top:215px;width:1px;height:21px;background:#d4d4d4;"></div>
<div class="abs" style="left:0px;top:236px;width:1365px;height:1px;background:#c0c0c0;"></div>
<div class="abs" style="left:39px;top:237px;width:1px;height:451px;background:#c0c0c0;"></div>
<div class="abs" style="left:0px;top:258px;width:39px;height:1px;background:#c0c0c0;"></div>
<div class="abs" style="left:40px;top:258px;width:1313px;height:1px;background:#e2e3e3;"></div>
<div class="abs" style="left:0px;top:280px;width:39px;height:1px;background:#c0c0c0;"></div>
<div class="abs" style="left:40px;top:280px;width:1313px;height:1px;background:#e2e3e3;"></div>
<div class="abs" style="left:0px;top:302px;width:39px;height:1px;background:#c0c0c0;"></div>
<div class="abs" style="left:40px;top:302px;width:1313px;height:1px;background:#e2e3e3;"></div>
<div class="abs" style="left:0px;top:324px;width:39px;height:1px;background:#c0c0c0;"></div>
<div class="abs" style="left:40px;top:324px;width:1313px;height:1px;background:#e2e3e3;"></div>
<div class="abs" style="left:0px;top:346px;width:39px;height:1px;background:#c0c0c0;"></div>
<div class="abs" style="left:40px;top:346px;width:1313px;height:1px;background:#e2e3e3;"></div>
<div class="abs" style="left:0px;top:368px;width:39px;height:1px;background:#c0c0c0;"></div>
<div class="abs" style="left:40px;top:368px;width:1313px;height:1px;background:#e2e3e3;"></div>
<div class="abs" style="left:0px;top:390px;width:39px;height:1px;background:#c0c0c0;"></div>
<div class="abs" style="left:40px;top:390px;width:1313px;height:1px;background:#e2e3e3;"></div>
<div class="abs" style="left:0px;top:412px;width:39px;height:1px;background:#c0c0c0;"></div>
<div class="abs" style="left:40px;top:412px;width:1313px;height:1px;background:#e2e3e3;"></div>
<div class="abs" style="left:0px;top:434px;width:39px;height:1px;background:#c0c0c0;"></div>
<div class="abs" style="left:40px;top:434px;width:1313px;height:1px;background:#e2e3e3;"></div>
<div class="abs" style="left:0px;top:456px;width:39px;height:1px;background:#c0c0c0;"></div>
<div class="abs" style="left:40px;top:456px;width:1313px;height:1px;background:#e2e3e3;"></div>
<div class="abs" style="left:0px;top:478px;width:39px;height:1px;background:#c0c0c0;"></div>
<div class="abs" style="left:40px;top:478px;width:1313px;height:1px;background:#e2e3e3;"></div>
<div class="abs" style="left:0px;top:500px;width:39px;height:1px;background:#c0c0c0;"></div>
<div class="abs" style="left:40px;top:500px;width:1313px;height:1px;background:#e2e3e3;"></div>
<div class="abs" style="left:0px;top:522px;width:39px;height:1px;background:#c0c0c0;"></div>
<div class="abs" style="left:40px;top:522px;width:1313px;height:1px;background:#e2e3e3;"></div>
<div class="abs" style="left:0px;top:544px;width:39px;height:1px;background:#c0c0c0;"></div>
<div class="abs" style="left:40px;top:544px;width:1313px;height:1px;background:#e2e3e3;"></div>
<div class="abs" style="left:0px;top:566px;width:39px;height:1px;background:#c0c0c0;"></div>
<div class="abs" style="left:40px;top:566px;width:1313px;height:1px;background:#e2e3e3;"></div>
<div class="abs" style="left:0px;top:588px;width:39px;height:1px;background:#c0c0c0;"></div>
<div class="abs" style="left:40px;top:588px;width:1313px;height:1px;background:#e2e3e3;"></div>
<div class="abs" style="left:0px;top:610px;width:39px;height:1px;background:#c0c0c0;"></div>
<div class="abs" style="left:40px;top:610px;width:1313px;height:1px;background:#e2e3e3;"></div>
<div class="abs" style="left:0px;top:632px;width:39px;height:1px;background:#c0c0c0;"></div>
<div class="abs" style="left:40px;top:632px;width:1313px;height:1px;background:#e2e3e3;"></div>
<div class="abs" style="left:0px;top:654px;width:39px;height:1px;background:#c0c0c0;"></div>
<div class="abs" style="left:40px;top:654px;width:1313px;height:1px;background:#e2e3e3;"></div>
<div class="abs" style="left:0px;top:676px;width:39px;height:1px;background:#c0c0c0;"></div>
<div class="abs" style="left:40px;top:676px;width:1313px;height:1px;background:#e2e3e3;"></div>
<div class="abs" style="left:0px;top:698px;width:39px;height:1px;background:#c0c0c0;"></div>
<div class="abs" style="left:40px;top:698px;width:1313px;height:1px;background:#e2e3e3;"></div>
<div class="abs" style="left:36px;top:215px;width:4px;height:22px;background:#bdbdbd;"></div>
<div class="abs" style="left:0px;top:233px;width:40px;height:4px;background:#bdbdbd;"></div>
<div class="t" style="left:40.3px;width:40px;text-align:center;top:221.58px;font-size:9px;color:#5f6368">A</div>
<div class="t" style="left:105.3px;width:40px;text-align:center;top:221.58px;font-size:9px;color:#5f6368">B</div>
<div class="t" style="left:196.3px;width:40px;text-align:center;top:221.58px;font-size:9px;color:#5f6368">C</div>
<div class="t" style="left:287.3px;width:40px;text-align:center;top:221.58px;font-size:9px;color:#5f6368">D</div>
<div class="t" style="left:378.3px;width:40px;text-align:center;top:221.58px;font-size:9px;color:#5f6368">E</div>
<div class="t" style="left:469.3px;width:40px;text-align:center;top:221.58px;font-size:9px;color:#5f6368">F</div>
<div class="t" style="left:560.3px;width:40px;text-align:center;top:221.58px;font-size:9px;color:#5f6368">G</div>
<div class="t" style="left:651.3px;width:40px;text-align:center;top:221.58px;font-size:9px;color:#5f6368">H</div>
<div class="t" style="left:742.3px;width:40px;text-align:center;top:221.58px;font-size:9px;color:#5f6368">I</div>
<div class="t" style="left:833.3px;width:40px;text-align:center;top:221.58px;font-size:9px;color:#5f6368">J</div>
<div class="t" style="left:924.3px;width:40px;text-align:center;top:221.58px;font-size:9px;color:#5f6368">K</div>
<div class="t" style="left:1015.3px;width:40px;text-align:center;top:221.58px;font-size:9px;color:#5f6368">L</div>
<div class="t" style="left:1106.3px;width:40px;text-align:center;top:221.58px;font-size:9px;color:#5f6368">M</div>
<div class="t" style="left:1197.3px;width:40px;text-align:center;top:221.58px;font-size:9px;color:#5f6368">N</div>
<div class="t" style="left:1288.3px;width:40px;text-align:center;top:221.58px;font-size:9px;color:#5f6368">O</div>
<div class="t" style="left:0;width:39px;text-align:center;top:242.53px;font-size:10px;color:#5f6368">1</div>
<div class="t" style="left:0;width:39px;text-align:center;top:264.54px;font-size:10px;color:#5f6368">2</div>
<div class="t" style="left:0;width:39px;text-align:center;top:286.54px;font-size:10px;color:#5f6368">3</div>
<div class="t" style="left:0;width:39px;text-align:center;top:308.54px;font-size:10px;color:#5f6368">4</div>
<div class="t" style="left:0;width:39px;text-align:center;top:330.54px;font-size:10px;color:#5f6368">5</div>
<div class="t" style="left:0;width:39px;text-align:center;top:352.54px;font-size:10px;color:#5f6368">6</div>
<div class="t" style="left:0;width:39px;text-align:center;top:374.54px;font-size:10px;color:#5f6368">7</div>
<div class="t" style="left:0;width:39px;text-align:center;top:396.54px;font-size:10px;color:#5f6368">8</div>
<div class="t" style="left:0;width:39px;text-align:center;top:418.54px;font-size:10px;color:#5f6368">9</div>
<div class="t" style="left:0;width:39px;text-align:center;top:440.54px;font-size:10px;color:#5f6368">10</div>
<div class="t" style="left:0;width:39px;text-align:center;top:462.54px;font-size:10px;color:#5f6368">11</div>
<div class="t" style="left:0;width:39px;text-align:center;top:484.54px;font-size:10px;color:#5f6368">12</div>
<div class="t" style="left:0;width:39px;text-align:center;top:506.54px;font-size:10px;color:#5f6368">13</div>
<div class="t" style="left:0;width:39px;text-align:center;top:528.53px;font-size:10px;color:#5f6368">14</div>
<div class="t" style="left:0;width:39px;text-align:center;top:550.53px;font-size:10px;color:#5f6368">15</div>
<div class="t" style="left:0;width:39px;text-align:center;top:572.53px;font-size:10px;color:#5f6368">16</div>
<div class="t" style="left:0;width:39px;text-align:center;top:594.53px;font-size:10px;color:#5f6368">17</div>
<div class="t" style="left:0;width:39px;text-align:center;top:616.53px;font-size:10px;color:#5f6368">18</div>
<div class="t" style="left:0;width:39px;text-align:center;top:638.53px;font-size:10px;color:#5f6368">19</div>
<div class="t" style="left:0;width:39px;text-align:center;top:660.53px;font-size:10px;color:#5f6368">20</div>
<div class="t" style="left:0;width:39px;text-align:center;top:682.53px;font-size:10px;color:#5f6368">21</div>
<div class="abs" style="left:80px;top:237px;width:454px;height:21px;background:#0078ff;"></div>
<div class="clip" style="left:83.6px;top:237px;width:86px;height:21px"><div class="t" style="left:0px;top:3.85px;font-size:14px;color:#fff;font-weight:bold;">Name</div></div>
<div class="clip" style="left:174.2px;top:237px;width:86px;height:21px"><div class="t" style="left:0px;top:3.85px;font-size:14px;color:#fff;font-weight:bold;">E-mail</div></div>
<div class="clip" style="left:264.9px;top:237px;width:87px;height:21px"><div class="t" style="left:0px;top:3.85px;font-size:14px;color:#fff;font-weight:bold;">Mobile</div></div>
<div class="clip" style="left:356.25px;top:237px;width:86.5px;height:21px"><div class="t" style="left:0px;top:3.85px;font-size:14px;color:#fff;font-weight:bold;">PREERN NO.</div></div>
<div class="clip" style="left:447.9px;top:237px;width:86px;height:21px"><div class="t" style="left:0px;top:3.85px;font-size:14px;color:#fff;font-weight:bold;">Branch</div></div>
<div class="t" style="left:42.7px;top:243.89px;font-size:11px;color:#000;font-weight:normal;">Sno.</div>
<div class="t" style="left:40px;width:36.4px;text-align:right;top:265.99px;font-size:11px;color:#000">1</div>
<div class="clip" style="left:80px;top:258px;width:90px;height:22px"><div class="t" style="left:3px;top:3.60px;font-size:14.3px;color:#000;font-weight:normal;">Nandani Kushwaha</div></div>
<div class="clip" style="left:171px;top:258px;width:90px;height:22px"><div class="t" style="left:3.6px;top:4.84px;font-size:12px;color:#1155cc;font-weight:normal;text-decoration:underline">nandaniku1632@gmail.com</div></div>
<div class="clip" style="left:262px;top:258px;width:90px;height:22px"><div class="t" style="left:12.2px;top:4.84px;font-size:12px;color:#000;font-weight:normal;">9335416590</div></div>
<div class="clip" style="left:353px;top:258px;width:90px;height:22px"><div class="t" style="left:-0.2px;top:5.04px;font-size:12px;color:#000;font-weight:normal;">REERN20003068</div></div>
<div class="clip" style="left:444px;top:258px;width:90px;height:22px"><div class="t" style="left:3.0px;top:5.20px;font-size:13px;color:#000;font-weight:normal;transform:scaleX(0.9);transform-origin:0 0">0</div></div>
<div class="t" style="left:40px;width:36.4px;text-align:right;top:287.99px;font-size:11px;color:#000">2</div>
<div class="clip" style="left:80px;top:280px;width:90px;height:22px"><div class="t" style="left:3px;top:3.60px;font-size:14.3px;color:#000;font-weight:normal;">Avshesh Pratap</div></div>
<div class="clip" style="left:171px;top:280px;width:90px;height:22px"><div class="t" style="left:3.6px;top:4.84px;font-size:12px;color:#1155cc;font-weight:normal;text-decoration:underline">avsheshpratapsingh</div></div>
<div class="clip" style="left:262px;top:280px;width:90px;height:22px"><div class="t" style="left:12.2px;top:4.84px;font-size:12px;color:#000;font-weight:normal;">8953427444</div></div>
<div class="clip" style="left:353px;top:280px;width:90px;height:22px"><div class="t" style="left:-0.2px;top:5.04px;font-size:12px;color:#000;font-weight:normal;">REERN20004523</div></div>
<div class="clip" style="left:444px;top:280px;width:90px;height:22px"><div class="t" style="left:3.0px;top:5.20px;font-size:13px;color:#000;font-weight:normal;transform:scaleX(0.9);transform-origin:0 0">0</div></div>
<div class="t" style="left:40px;width:36.4px;text-align:right;top:309.99px;font-size:11px;color:#000">3</div>
<div class="clip" style="left:80px;top:302px;width:90px;height:22px"><div class="t" style="left:3px;top:3.60px;font-size:14.3px;color:#000;font-weight:normal;">Abhishek Singh</div></div>
<div class="clip" style="left:171px;top:302px;width:90px;height:22px"><div class="t" style="left:3.6px;top:3.40px;font-size:14.3px;color:#000;font-weight:normal;">abhisheksingh</div></div>
<div class="clip" style="left:262px;top:302px;width:90px;height:22px"><div class="t" style="left:12.2px;top:4.84px;font-size:12px;color:#000;font-weight:normal;">9119873953</div></div>
<div class="clip" style="left:353px;top:302px;width:90px;height:22px"><div class="t" style="left:-0.2px;top:5.04px;font-size:12px;color:#000;font-weight:normal;">REERN20003699</div></div>
<div class="clip" style="left:444px;top:302px;width:90px;height:22px"><div class="t" style="left:3.0px;top:5.20px;font-size:13px;color:#000;font-weight:normal;transform:scaleX(0.9);transform-origin:0 0">0</div></div>
<div class="t" style="left:40px;width:36.4px;text-align:right;top:331.99px;font-size:11px;color:#000">4</div>
<div class="clip" style="left:80px;top:324px;width:90px;height:22px"><div class="t" style="left:3px;top:3.60px;font-size:14.3px;color:#000;font-weight:normal;">Shashank Kumar</div></div>
<div class="clip" style="left:171px;top:324px;width:90px;height:22px"><div class="t" style="left:3.6px;top:3.40px;font-size:14.3px;color:#000;font-weight:normal;">shashank.1998</div></div>
<div class="clip" style="left:262px;top:324px;width:90px;height:22px"><div class="t" style="left:12.2px;top:4.84px;font-size:12px;color:#000;font-weight:normal;">6393455149</div></div>
<div class="clip" style="left:353px;top:324px;width:90px;height:22px"><div class="t" style="left:-0.2px;top:5.04px;font-size:12px;color:#000;font-weight:normal;">REERN20002731</div></div>
<div class="clip" style="left:444px;top:324px;width:90px;height:22px"><div class="t" style="left:3.0px;top:5.20px;font-size:13px;color:#000;font-weight:normal;transform:scaleX(0.9);transform-origin:0 0">0</div></div>
<div class="t" style="left:40px;width:36.4px;text-align:right;top:353.99px;font-size:11px;color:#000">5</div>
<div class="clip" style="left:80px;top:346px;width:90px;height:22px"><div class="t" style="left:3px;top:3.60px;font-size:14.3px;color:#000;font-weight:normal;">Atul Aishwary</div></div>
<div class="clip" style="left:171px;top:346px;width:90px;height:22px"><div class="t" style="left:3.6px;top:3.40px;font-size:14.3px;color:#000;font-weight:normal;">ATULAISHWARY</div></div>
<div class="clip" style="left:262px;top:346px;width:90px;height:22px"><div class="t" style="left:12.2px;top:7.64px;font-size:12px;color:#000;font-weight:normal;">7398794902</div></div>
<div class="clip" style="left:353px;top:346px;width:90px;height:22px"><div class="t" style="left:-0.2px;top:5.04px;font-size:12px;color:#000;font-weight:normal;">REERN20003192</div></div>
<div class="clip" style="left:444px;top:346px;width:90px;height:22px"><div class="t" style="left:3.0px;top:5.20px;font-size:13px;color:#000;font-weight:normal;transform:scaleX(0.9);transform-origin:0 0">0</div></div>
<div class="t" style="left:40px;width:36.4px;text-align:right;top:375.99px;font-size:11px;color:#000">6</div>
<div class="clip" style="left:80px;top:368px;width:90px;height:22px"><div class="t" style="left:3px;top:3.60px;font-size:14.3px;color:#000;font-weight:normal;">Ashok Kumar</div></div>
<div class="clip" style="left:171px;top:368px;width:90px;height:22px"><div class="t" style="left:3.6px;top:3.40px;font-size:14.3px;color:#000;font-weight:normal;">ashokbind0101</div></div>
<div class="clip" style="left:262px;top:368px;width:90px;height:22px"><div class="t" style="left:12.2px;top:4.84px;font-size:12px;color:#000;font-weight:normal;">9140487238</div></div>
<div class="clip" style="left:353px;top:368px;width:90px;height:22px"><div class="t" style="left:-0.2px;top:5.04px;font-size:12px;color:#000;font-weight:normal;">REERN20002732</div></div>
<div class="clip" style="left:444px;top:368px;width:90px;height:22px"><div class="t" style="left:3.0px;top:5.20px;font-size:13px;color:#000;font-weight:normal;transform:scaleX(0.9);transform-origin:0 0">0</div></div>
<div class="t" style="left:40px;width:36.4px;text-align:right;top:397.99px;font-size:11px;color:#000">7</div>
<div class="clip" style="left:80px;top:390px;width:90px;height:22px"><div class="t" style="left:3px;top:3.60px;font-size:14.3px;color:#000;font-weight:normal;">Anil Sharma</div></div>
<div class="clip" style="left:171px;top:390px;width:90px;height:22px"><div class="t" style="left:3.6px;top:3.40px;font-size:14.3px;color:#000;font-weight:normal;">sanil6247@gmail</div></div>
<div class="clip" style="left:262px;top:390px;width:90px;height:22px"><div class="t" style="left:12.2px;top:4.84px;font-size:12px;color:#000;font-weight:normal;">8840590121</div></div>
<div class="clip" style="left:353px;top:390px;width:90px;height:22px"><div class="t" style="left:-0.2px;top:5.04px;font-size:12px;color:#000;font-weight:normal;">REERN20004531</div></div>
<div class="clip" style="left:444px;top:390px;width:90px;height:22px"><div class="t" style="left:3.0px;top:5.20px;font-size:13px;color:#000;font-weight:normal;transform:scaleX(0.9);transform-origin:0 0">0</div></div>
<div class="t" style="left:40px;width:36.4px;text-align:right;top:419.99px;font-size:11px;color:#000">8</div>
<div class="clip" style="left:80px;top:412px;width:90px;height:22px"><div class="t" style="left:3px;top:3.60px;font-size:14.3px;color:#000;font-weight:normal;">Vikas Kumar</div></div>
<div class="clip" style="left:171px;top:412px;width:90px;height:22px"><div class="t" style="left:3.6px;top:3.40px;font-size:14.3px;color:#000;font-weight:normal;">vk870759@gmail</div></div>
<div class="clip" style="left:262px;top:412px;width:90px;height:22px"><div class="t" style="left:12.2px;top:4.84px;font-size:12px;color:#000;font-weight:normal;">8707597011</div></div>
<div class="clip" style="left:353px;top:412px;width:90px;height:22px"><div class="t" style="left:-0.2px;top:5.04px;font-size:12px;color:#000;font-weight:normal;">REERN20004006</div></div>
<div class="clip" style="left:444px;top:412px;width:90px;height:22px"><div class="t" style="left:3.0px;top:5.20px;font-size:13px;color:#000;font-weight:normal;transform:scaleX(0.9);transform-origin:0 0">0</div></div>
<div class="t" style="left:40px;width:36.4px;text-align:right;top:441.99px;font-size:11px;color:#000">9</div>
<div class="clip" style="left:80px;top:434px;width:90px;height:22px"><div class="t" style="left:3px;top:3.60px;font-size:14.3px;color:#000;font-weight:normal;">Nitesh Kumar</div></div>
<div class="clip" style="left:171px;top:434px;width:90px;height:22px"><div class="t" style="left:3.6px;top:3.40px;font-size:14.3px;color:#000;font-weight:normal;">nk7390923092</div></div>
<div class="clip" style="left:262px;top:434px;width:90px;height:22px"><div class="t" style="left:12.2px;top:4.84px;font-size:12px;color:#000;font-weight:normal;">7390923092</div></div>
<div class="clip" style="left:353px;top:434px;width:90px;height:22px"><div class="t" style="left:-0.2px;top:5.04px;font-size:12px;color:#000;font-weight:normal;">REERN20003694</div></div>
<div class="clip" style="left:444px;top:434px;width:90px;height:22px"><div class="t" style="left:3.0px;top:5.20px;font-size:13px;color:#000;font-weight:normal;transform:scaleX(0.9);transform-origin:0 0">0</div></div>
<div class="t" style="left:40px;width:36.4px;text-align:right;top:463.99px;font-size:11px;color:#000">10</div>
<div class="clip" style="left:80px;top:456px;width:90px;height:22px"><div class="t" style="left:3px;top:3.60px;font-size:14.3px;color:#000;font-weight:normal;">Sudhanshu Singh</div></div>
<div class="clip" style="left:171px;top:456px;width:90px;height:22px"><div class="t" style="left:3.6px;top:3.40px;font-size:14.3px;color:#000;font-weight:normal;">sudhanshusingh</div></div>
<div class="clip" style="left:262px;top:456px;width:90px;height:22px"><div class="t" style="left:12.2px;top:4.84px;font-size:12px;color:#000;font-weight:normal;">7571869004</div></div>
<div class="clip" style="left:353px;top:456px;width:90px;height:22px"><div class="t" style="left:-0.2px;top:5.04px;font-size:12px;color:#000;font-weight:normal;">REERN20003173</div></div>
<div class="clip" style="left:444px;top:456px;width:90px;height:22px"><div class="t" style="left:3.0px;top:5.20px;font-size:13px;color:#000;font-weight:normal;transform:scaleX(0.9);transform-origin:0 0">0</div></div>
<div class="t" style="left:40px;width:36.4px;text-align:right;top:485.99px;font-size:11px;color:#000">11</div>
<div class="clip" style="left:80px;top:478px;width:90px;height:22px"><div class="t" style="left:3px;top:3.60px;font-size:14.3px;color:#000;font-weight:normal;">Satvik Krishna</div></div>
<div class="clip" style="left:171px;top:478px;width:90px;height:22px"><div class="t" style="left:3.6px;top:3.40px;font-size:14.3px;color:#000;font-weight:normal;">satviksharma5</div></div>
<div class="clip" style="left:262px;top:478px;width:90px;height:22px"><div class="t" style="left:12.2px;top:4.84px;font-size:12px;color:#000;font-weight:normal;">7905742418</div></div>
<div class="clip" style="left:353px;top:478px;width:90px;height:22px"><div class="t" style="left:-0.2px;top:5.04px;font-size:12px;color:#000;font-weight:normal;">REERN20002730</div></div>
<div class="clip" style="left:444px;top:478px;width:90px;height:22px"><div class="t" style="left:3.0px;top:5.20px;font-size:13px;color:#000;font-weight:normal;transform:scaleX(0.9);transform-origin:0 0">0</div></div>
<div class="t" style="left:40px;width:36.4px;text-align:right;top:507.99px;font-size:11px;color:#000">12</div>
<div class="clip" style="left:80px;top:500px;width:90px;height:22px"><div class="t" style="left:3px;top:3.60px;font-size:14.3px;color:#000;font-weight:normal;">Shahabuddin</div></div>
<div class="clip" style="left:171px;top:500px;width:90px;height:22px"><div class="t" style="left:3.6px;top:3.40px;font-size:14.3px;color:#000;font-weight:normal;">shahabuddin7</div></div>
<div class="clip" style="left:262px;top:500px;width:90px;height:22px"><div class="t" style="left:12.2px;top:7.64px;font-size:12px;color:#000;font-weight:normal;">6393370052</div></div>
<div class="clip" style="left:353px;top:500px;width:90px;height:22px"><div class="t" style="left:-0.2px;top:5.04px;font-size:12px;color:#000;font-weight:normal;">REERN20002731</div></div>
<div class="clip" style="left:444px;top:500px;width:90px;height:22px"><div class="t" style="left:3.0px;top:5.20px;font-size:13px;color:#000;font-weight:normal;transform:scaleX(0.9);transform-origin:0 0">0</div></div>
<div class="t" style="left:40px;width:36.4px;text-align:right;top:529.99px;font-size:11px;color:#000">13</div>
<div class="clip" style="left:80px;top:522px;width:90px;height:22px"><div class="t" style="left:3px;top:3.60px;font-size:14.3px;color:#000;font-weight:normal;">Neelesh Kumar</div></div>
<div class="clip" style="left:171px;top:522px;width:90px;height:22px"><div class="t" style="left:3.6px;top:3.40px;font-size:14.3px;color:#000;font-weight:normal;">neelmaurya80</div></div>
<div class="clip" style="left:262px;top:522px;width:90px;height:22px"><div class="t" style="left:12.2px;top:7.64px;font-size:12px;color:#000;font-weight:normal;">8881149904</div></div>
<div class="clip" style="left:353px;top:522px;width:90px;height:22px"><div class="t" style="left:-0.2px;top:5.04px;font-size:12px;color:#000;font-weight:normal;">REERN20002731</div></div>
<div class="clip" style="left:444px;top:522px;width:90px;height:22px"><div class="t" style="left:3.0px;top:5.20px;font-size:13px;color:#000;font-weight:normal;transform:scaleX(0.9);transform-origin:0 0">0</div></div>
<div class="t" style="left:40px;width:36.4px;text-align:right;top:551.99px;font-size:11px;color:#000">14</div>
<div class="clip" style="left:80px;top:544px;width:90px;height:22px"><div class="t" style="left:3px;top:3.60px;font-size:14.3px;color:#000;font-weight:normal;">Jyotish Upadhyay</div></div>
<div class="clip" style="left:171px;top:544px;width:90px;height:22px"><div class="t" style="left:3.6px;top:4.27px;font-size:12.2px;color:#1155cc;font-weight:normal;text-decoration:underline">jyotishupadhyay</div></div>
<div class="clip" style="left:262px;top:544px;width:90px;height:22px"><div class="t" style="left:12.2px;top:4.84px;font-size:12px;color:#000;font-weight:normal;">8081421104</div></div>
<div class="clip" style="left:353px;top:544px;width:90px;height:22px"><div class="t" style="left:-0.2px;top:5.04px;font-size:12px;color:#000;font-weight:normal;">REERN20003878</div></div>
<div class="clip" style="left:444px;top:544px;width:90px;height:22px"><div class="t" style="left:3.0px;top:5.20px;font-size:13px;color:#000;font-weight:normal;transform:scaleX(0.9);transform-origin:0 0">0</div></div>
<div class="t" style="left:40px;width:36.4px;text-align:right;top:573.99px;font-size:11px;color:#000">15</div>
<div class="clip" style="left:80px;top:566px;width:90px;height:22px"><div class="t" style="left:3px;top:3.60px;font-size:14.3px;color:#000;font-weight:normal;">Vikash Chaudhary</div></div>
<div class="clip" style="left:171px;top:566px;width:90px;height:22px"><div class="t" style="left:3.6px;top:3.40px;font-size:14.3px;color:#000;font-weight:normal;">vikashc878@gmail</div></div>
<div class="clip" style="left:262px;top:566px;width:90px;height:22px"><div class="t" style="left:12.2px;top:4.84px;font-size:12px;color:#000;font-weight:normal;">8419076871</div></div>
<div class="clip" style="left:353px;top:566px;width:90px;height:22px"><div class="t" style="left:-0.2px;top:5.04px;font-size:12px;color:#000;font-weight:normal;">REERN20003070</div></div>
<div class="clip" style="left:444px;top:566px;width:90px;height:22px"><div class="t" style="left:3.0px;top:5.20px;font-size:13px;color:#000;font-weight:normal;transform:scaleX(0.9);transform-origin:0 0">0</div></div>
<div class="t" style="left:40px;width:36.4px;text-align:right;top:595.99px;font-size:11px;color:#000">16</div>
<div class="clip" style="left:80px;top:588px;width:90px;height:22px"><div class="t" style="left:3px;top:3.60px;font-size:14.3px;color:#000;font-weight:normal;">Satish</div></div>
<div class="clip" style="left:171px;top:588px;width:90px;height:22px"><div class="t" style="left:3.6px;top:3.40px;font-size:14.3px;color:#000;font-weight:normal;">satishrawat17</div></div>
<div class="clip" style="left:262px;top:588px;width:90px;height:22px"><div class="t" style="left:12.2px;top:4.84px;font-size:12px;color:#000;font-weight:normal;">9598484531</div></div>
<div class="clip" style="left:353px;top:588px;width:90px;height:22px"><div class="t" style="left:-0.2px;top:5.04px;font-size:12px;color:#000;font-weight:normal;">REERN20002732</div></div>
<div class="clip" style="left:444px;top:588px;width:90px;height:22px"><div class="t" style="left:3.0px;top:5.20px;font-size:13px;color:#000;font-weight:normal;transform:scaleX(0.9);transform-origin:0 0">0</div></div>
<div class="t" style="left:40px;width:36.4px;text-align:right;top:617.99px;font-size:11px;color:#000">17</div>
<div class="clip" style="left:80px;top:610px;width:90px;height:22px"><div class="t" style="left:3px;top:3.60px;font-size:14.3px;color:#000;font-weight:normal;">Suraj Tripathi</div></div>
<div class="clip" style="left:171px;top:610px;width:90px;height:22px"><div class="t" style="left:3.6px;top:3.40px;font-size:14.3px;color:#000;font-weight:normal;">nirbhayt788@gmail</div></div>
<div class="clip" style="left:262px;top:610px;width:90px;height:22px"><div class="t" style="left:12.2px;top:4.84px;font-size:12px;color:#000;font-weight:normal;">9621106064</div></div>
<div class="clip" style="left:353px;top:610px;width:90px;height:22px"><div class="t" style="left:-0.2px;top:5.04px;font-size:12px;color:#000;font-weight:normal;">REERN20003679</div></div>
<div class="clip" style="left:444px;top:610px;width:90px;height:22px"><div class="t" style="left:3.0px;top:5.20px;font-size:13px;color:#000;font-weight:normal;transform:scaleX(0.9);transform-origin:0 0">0</div></div>
<div class="t" style="left:40px;width:36.4px;text-align:right;top:639.99px;font-size:11px;color:#000">18</div>
<div class="clip" style="left:80px;top:632px;width:90px;height:22px"><div class="t" style="left:3px;top:3.60px;font-size:14.3px;color:#000;font-weight:normal;">Tanay Tiwari</div></div>
<div class="clip" style="left:171px;top:632px;width:90px;height:22px"><div class="t" style="left:3.6px;top:3.40px;font-size:14.3px;color:#000;font-weight:normal;">tt1340517@gmail</div></div>
<div class="clip" style="left:262px;top:632px;width:90px;height:22px"><div class="t" style="left:12.2px;top:7.64px;font-size:12px;color:#000;font-weight:normal;">7839911830</div></div>
<div class="clip" style="left:353px;top:632px;width:90px;height:22px"><div class="t" style="left:-0.2px;top:5.04px;font-size:12px;color:#000;font-weight:normal;">REERN20003094</div></div>
<div class="clip" style="left:444px;top:632px;width:90px;height:22px"><div class="t" style="left:3.0px;top:5.20px;font-size:13px;color:#000;font-weight:normal;transform:scaleX(0.9);transform-origin:0 0">0</div></div>
<div class="t" style="left:40px;width:36.4px;text-align:right;top:661.99px;font-size:11px;color:#000">19</div>
<div class="clip" style="left:80px;top:654px;width:90px;height:22px"><div class="t" style="left:3px;top:3.60px;font-size:14.3px;color:#000;font-weight:normal;">Gaurav Kumar</div></div>
<div class="clip" style="left:171px;top:654px;width:90px;height:22px"><div class="t" style="left:3.6px;top:3.40px;font-size:14.3px;color:#000;font-weight:normal;">golu1569@gmail</div></div>
<div class="clip" style="left:262px;top:654px;width:90px;height:22px"><div class="t" style="left:12.2px;top:4.84px;font-size:12px;color:#000;font-weight:normal;">6387765851</div></div>
<div class="clip" style="left:353px;top:654px;width:90px;height:22px"><div class="t" style="left:-0.2px;top:5.04px;font-size:12px;color:#000;font-weight:normal;">REERN20004128</div></div>
<div class="clip" style="left:444px;top:654px;width:90px;height:22px"><div class="t" style="left:3.0px;top:5.20px;font-size:13px;color:#000;font-weight:normal;transform:scaleX(0.9);transform-origin:0 0">0</div></div>
<div class="t" style="left:40px;width:36.4px;text-align:right;top:683.99px;font-size:11px;color:#000">20</div>
<div class="clip" style="left:80px;top:676px;width:90px;height:22px"><div class="t" style="left:3px;top:3.60px;font-size:14.3px;color:#000;font-weight:normal;">Nandana Sahani</div></div>
<div class="clip" style="left:171px;top:676px;width:90px;height:22px"><div class="t" style="left:3.6px;top:3.40px;font-size:14.3px;color:#000;font-weight:normal;">sahaninandan</div></div>
<div class="clip" style="left:262px;top:676px;width:90px;height:22px"><div class="t" style="left:12.2px;top:4.84px;font-size:12px;color:#000;font-weight:normal;">8858451893</div></div>
<div class="clip" style="left:353px;top:676px;width:90px;height:22px"><div class="t" style="left:-0.2px;top:5.04px;font-size:12px;color:#000;font-weight:normal;">REERN20003889</div></div>
<div class="clip" style="left:444px;top:676px;width:90px;height:22px"><div class="t" style="left:3.0px;top:5.20px;font-size:13px;color:#000;font-weight:normal;transform:scaleX(0.9);transform-origin:0 0">0</div></div>
<div class="abs" style="left:40px;top:258px;width:495px;height:1px;background:#000;"></div>
<div class="abs" style="left:40px;top:280px;width:495px;height:1px;background:#000;"></div>
<div class="abs" style="left:40px;top:302px;width:495px;height:1px;background:#000;"></div>
<div class="abs" style="left:40px;top:324px;width:495px;height:1px;background:#000;"></div>
<div class="abs" style="left:40px;top:346px;width:495px;height:1px;background:#000;"></div>
<div class="abs" style="left:40px;top:368px;width:495px;height:1px;background:#000;"></div>
<div class="abs" style="left:40px;top:390px;width:495px;height:1px;background:#000;"></div>
<div class="abs" style="left:40px;top:412px;width:495px;height:1px;background:#000;"></div>
<div class="abs" style="left:40px;top:434px;width:495px;height:1px;background:#000;"></div>
<div class="abs" style="left:40px;top:456px;width:495px;height:1px;background:#000;"></div>
<div class="abs" style="left:40px;top:478px;width:495px;height:1px;background:#000;"></div>
<div class="abs" style="left:40px;top:500px;width:495px;height:1px;background:#000;"></div>
<div class="abs" style="left:40px;top:522px;width:495px;height:1px;background:#000;"></div>
<div class="abs" style="left:40px;top:544px;width:495px;height:1px;background:#000;"></div>
<div class="abs" style="left:40px;top:566px;width:495px;height:1px;background:#000;"></div>
<div class="abs" style="left:40px;top:588px;width:495px;height:1px;background:#000;"></div>
<div class="abs" style="left:40px;top:610px;width:495px;height:1px;background:#000;"></div>
<div class="abs" style="left:40px;top:632px;width:495px;height:1px;background:#000;"></div>
<div class="abs" style="left:40px;top:654px;width:495px;height:1px;background:#000;"></div>
<div class="abs" style="left:40px;top:676px;width:495px;height:1px;background:#000;"></div>
<div class="abs" style="left:40px;top:698px;width:495px;height:1px;background:#000;"></div>
<div class="abs" style="left:79px;top:258px;width:1px;height:430px;background:#000;"></div>
<div class="abs" style="left:170px;top:237px;width:1px;height:451px;background:#000;"></div>
<div class="abs" style="left:261px;top:237px;width:1px;height:451px;background:#000;"></div>
<div class="abs" style="left:352px;top:237px;width:1px;height:451px;background:#000;"></div>
<div class="abs" style="left:443px;top:237px;width:1px;height:451px;background:#000;"></div>
<div class="abs" style="left:534px;top:237px;width:1px;height:451px;background:#000;"></div>
<div class="abs" style="left:40px;top:236px;width:1px;height:22px;background:#1a73e8;"></div>
<div class="abs" style="left:40px;top:257px;width:37px;height:1px;background:#1a73e8;"></div>
<div class="abs" style="left:76px;top:254px;width:6px;height:6px;background:#1a73e8;border-top:1px solid #fff;border-left:1px solid #fff"></div>
<div class="abs" style="left:1356px;top:237px;width:9px;height:451px;background:#fff;"></div>
<div class="abs" style="left:1356px;top:238px;width:8px;height:23px;background:#dadce0;border-radius:4px"></div>
<div class="abs" style="left:1356px;top:661px;width:9px;height:27px;background:#fff;border-top:1px solid #e8e8e8;border-left:1px solid #e8e8e8"></div>
<div class="abs" style="left:1356px;top:675px;width:9px;height:1px;background:#e8e8e8;"></div>
<div class="caret" style="left:1358px;top:666px;border-left-width:2.5px;border-right-width:2.5px;border-top-width:0;border-bottom-width:3px;border-bottom-color:#bdbdbd"></div>
<div class="caret" style="left:1358px;top:680px;border-left-width:2.5px;border-right-width:2.5px;border-top-width:3px;border-top-color:#bdbdbd"></div>
<div class="abs" style="left:0px;top:688px;width:1365px;height:10px;background:#fff;"></div>
<div class="abs" style="left:0px;top:688px;width:1365px;height:1px;background:#e2e3e3;"></div>
<div class="abs" style="left:40px;top:689px;width:730px;height:8px;background:#dadce0;border-radius:4px"></div>
<div class="abs" style="left:1328px;top:689px;width:27px;height:9px;background:#fff;border-left:1px solid #e8e8e8"></div>
<div class="abs" style="left:1341px;top:689px;width:1px;height:9px;background:#e8e8e8;"></div>
<div class="abs" style="left:1355px;top:689px;width:1px;height:9px;background:#e8e8e8;"></div>
<svg class="ic" style="left:1332px;top:690px;width:3px;height:6px" viewBox="0 0 3 6"><path d="M3 0v6L0 3z" fill="#bdbdbd"/></svg>
<svg class="ic" style="left:1346px;top:690px;width:3px;height:6px" viewBox="0 0 3 6"><path d="M0 0v6l3-3z" fill="#bdbdbd"/></svg>
<div class="abs" style="left:0px;top:672px;width:40px;height:4px;background:#4d90fe;"></div>
<div class="abs" style="left:0px;top:698px;width:1365px;height:35px;background:#f1f3f4;"></div>
<svg class="ic" style="left:43.8px;top:710.4px;width:10.2px;height:10.2px" viewBox="0 0 10 10"><path d="M5 0v10M0 5h10" stroke="#000" stroke-width="2"/></svg>
<svg class="ic" style="left:71.6px;top:710.4px;width:11px;height:10.2px" viewBox="0 0 11 10"><path d="M0 1h11M0 3.8h11M0 6.5h11M0 9.2h11" stroke="#5f6368" stroke-width="1.5"/></svg>
<div class="abs" style="left:104px;top:698px;width:86.5px;height:35px;background:#fff;box-shadow:0 0 2px rgba(60,64,67,.35)"></div>
<div class="t" style="left:119.2px;top:709.93px;font-size:12.6px;color:#188038;font-weight:normal;-webkit-text-stroke:0.35px #188038">Sheet1</div>
<div class="caret" style="left:169px;top:714px;border-left-width:3.35px;border-right-width:3.35px;border-top-width:3.8px;border-top-color:#188038"></div>
<div class="abs" style="left:1220px;top:698px;width:95px;height:35px;background:#fcfcfc;border-left:1px solid #d0d0d0;border-right:1px solid #d0d0d0"></div>
<svg class="ic" style="left:1231px;top:707px;width:16px;height:19px" viewBox="0 0 16 19"><path d="M2 0h12a2 2 0 0 1 2 2v12a2 2 0 0 1-2 2h-4.5L8 18.5 6.5 16H2a2 2 0 0 1-2-2V2a2 2 0 0 1 2-2z" fill="#0f9d58"/><path d="M8 2.8C8.8 5.9 10 7.2 13 8 10 8.8 8.8 10.1 8 13.2 7.2 10.1 6 8.8 3 8 6 7.2 7.2 5.9 8 2.8z" fill="#fff"/></svg>
<div class="t" style="left:1260.1px;top:711.00px;font-size:10.4px;color:#0f9d58;font-weight:normal;">Explore</div>
<svg class="ic" style="left:1337px;top:714px;width:5.6px;height:8px" viewBox="0 0 5.6 8"><path d="M5 0.5L1 4l4 3.5" stroke="#5f6368" stroke-width="1.5" fill="none"/></svg>
<div class="abs" style="left:14px;top:674px;width:68px;height:28px;background:#fff;border-radius:2px"></div>
<div class="abs" style="left:15px;top:675px;width:66px;height:26px;background:#232323;border-radius:1px"></div>
<svg class="ic" style="left:44px;top:700px;width:13px;height:6px" viewBox="0 0 13 6"><path d="M0 0h13L6.5 6z" fill="#232323"/></svg>
<div class="t" style="left:23.6px;top:683.13px;font-size:10px;color:#fff;font-weight:bold;">Add Sheet</div>
</body></html>
